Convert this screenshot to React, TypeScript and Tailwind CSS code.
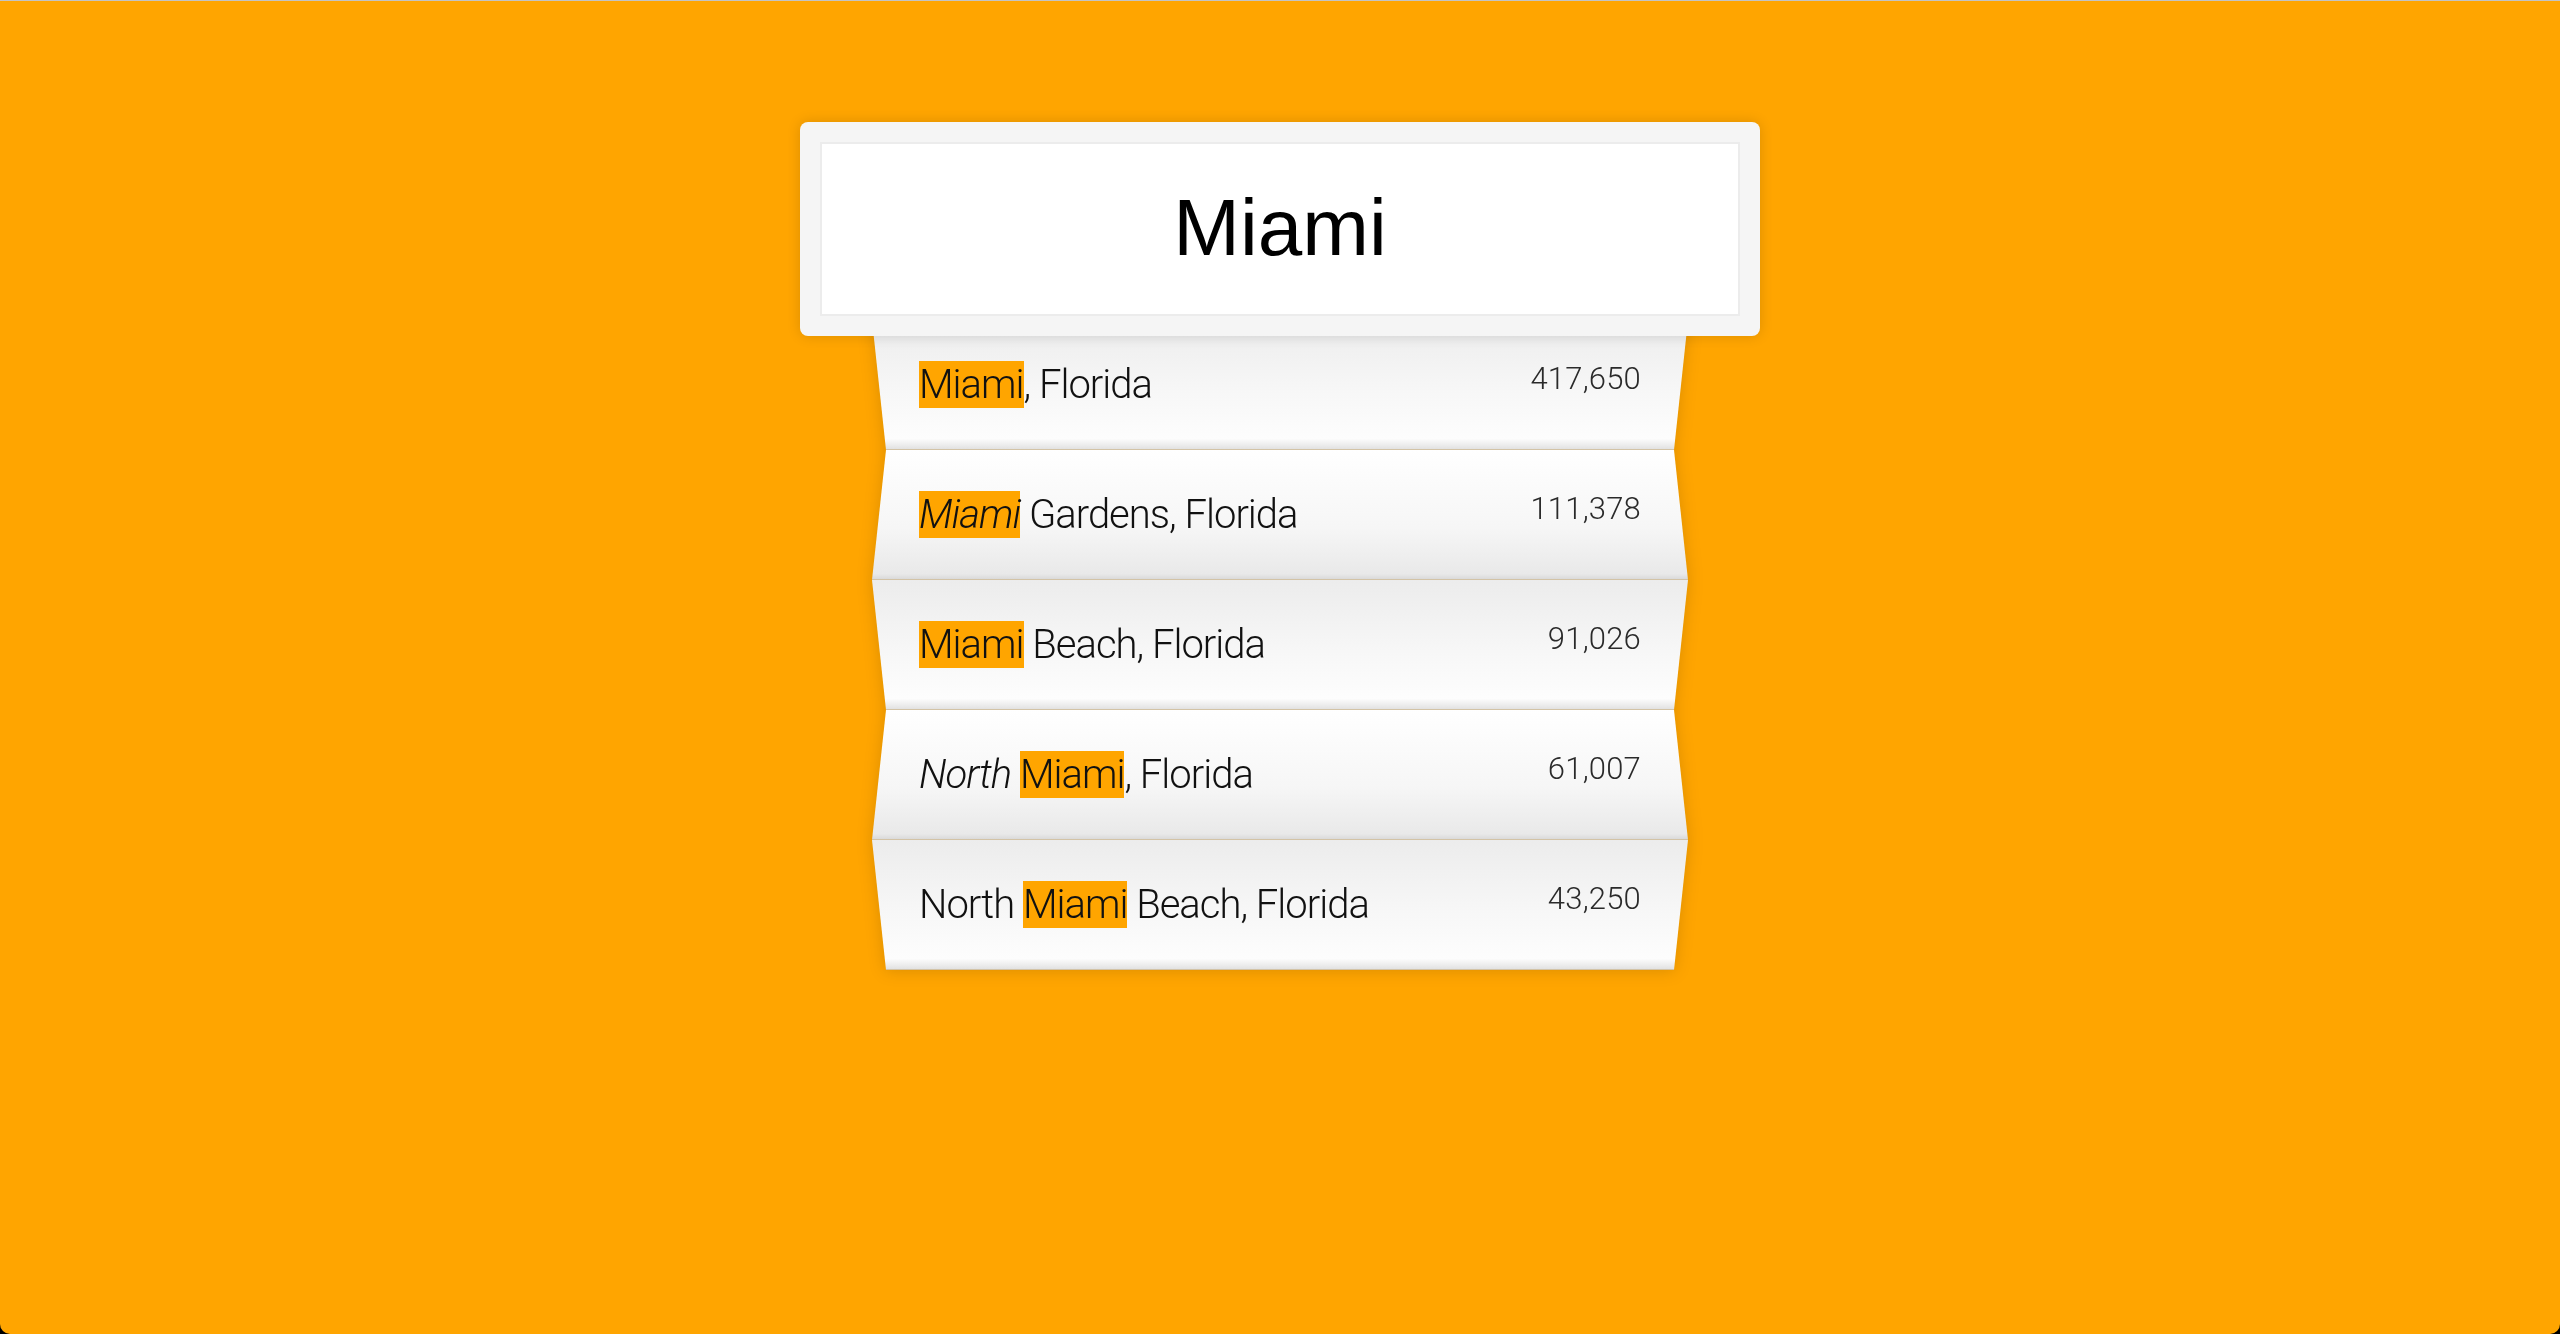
import React from "react";

type Part = { t: string; hl?: boolean; it?: boolean };
type Row = { parts: Part[]; pop: string; narrowTop: boolean };

const rows: Row[] = [
  { parts: [{ t: "Miami", hl: true }, { t: ", Florida" }], pop: "417,650", narrowTop: false },
  { parts: [{ t: "Miami", hl: true, it: true }, { t: " Gardens, Florida" }], pop: "111,378", narrowTop: true },
  { parts: [{ t: "Miami", hl: true }, { t: " Beach, Florida" }], pop: "91,026", narrowTop: false },
  { parts: [{ t: "North", it: true }, { t: " " }, { t: "Miami", hl: true }, { t: ", Florida" }], pop: "61,007", narrowTop: true },
  { parts: [{ t: "North " }, { t: "Miami", hl: true }, { t: " Beach, Florida" }], pop: "43,250", narrowTop: false },
];

function Item({ row }: { row: Row }) {
  const shape = row.narrowTop
    ? "[clip-path:polygon(14px_0,calc(100%_-_14px)_0,100%_100%,0_100%)] bg-[linear-gradient(to_bottom,#ffffff,#f6f6f6_60%,#e9e9e9_96%,#dadada)]"
    : "[clip-path:polygon(0_0,100%_0,calc(100%_-_14px)_100%,14px_100%)] bg-[linear-gradient(to_bottom,#ececec,#f7f7f7_55%,#fdfdfd_92%,#e2e2e2)]";
  return (
    <div
      className={`w-[816px] h-[130px] border-b border-[#d3c3a6] flex items-center justify-between px-[47px] ${shape}`}
    >
      <div className="text-[40px] leading-[47px] font-light text-[#111] tracking-[-1px] font-['Roboto','Liberation_Sans',sans-serif] whitespace-nowrap">
        {row.parts.map((p, i) => (
          <span
            key={i}
            className={`${p.hl ? "bg-[#ffa500]" : ""} ${p.it ? "italic" : ""}`}
          >
            {p.t}
          </span>
        ))}
      </div>
      <div className="relative -top-[5px] text-[31px] font-light text-[#2a2a2a] tracking-[0.2px] font-['Roboto','Liberation_Sans',sans-serif]">
        {row.pop}
      </div>
    </div>
  );
}

export default function App() {
  return (
    <div className="w-full h-screen bg-black">
      <div className="h-full bg-[#ffa500] border-t border-[#c4c4c4] rounded-b-[10px] flex flex-col items-center pt-[121px]">
        <div className="relative z-10 w-[960px] h-[214px] rounded-[8px] bg-[#f5f5f5] p-5 shadow-[0_0_14px_rgba(0,0,0,0.14)]">
          <div className="h-full bg-white border-2 border-[#ececec] flex items-center justify-center">
            <span className="text-[80px] text-black font-['Liberation_Sans',Arial,sans-serif] leading-none pb-[2px]">
              Miami
            </span>
          </div>
        </div>
        <div className="-mt-4 flex flex-col drop-shadow-[0_1px_8px_rgba(0,0,0,0.14)]">
          {rows.map((r, i) => (
            <Item key={i} row={r} />
          ))}
        </div>
      </div>
    </div>
  );
}
